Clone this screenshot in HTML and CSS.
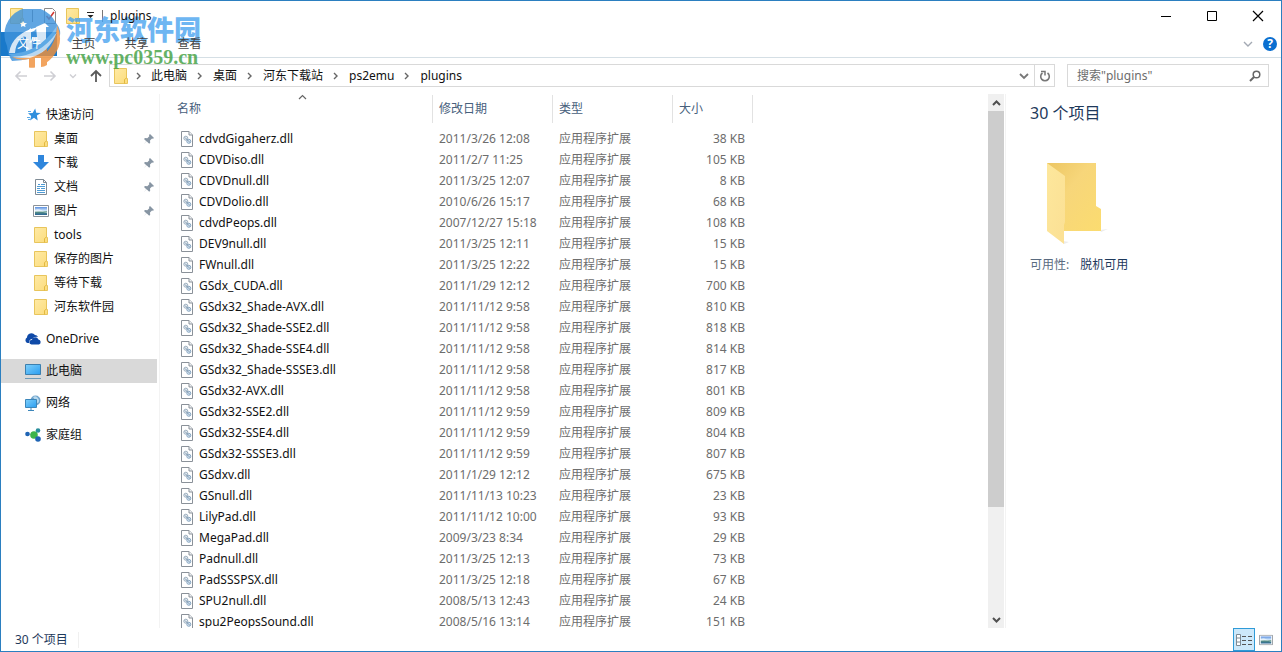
FILE: index.html
```
<!DOCTYPE html>
<html lang="zh-CN">
<head>
<meta charset="utf-8">
<title>plugins</title>
<link rel="stylesheet" href="styles.css">
</head>
<body>
<svg class="defs" aria-hidden="true">
  <defs>
    <linearGradient id="g-folder" x1="0" y1="0" x2="1" y2="1"><stop offset="0" stop-color="#ffeaa5"/><stop offset="1" stop-color="#fbdc7c"/></linearGradient>
    <linearGradient id="g-screen" x1="0" y1="0" x2="1" y2="1"><stop offset="0" stop-color="#7fd0fb"/><stop offset="1" stop-color="#2a9df0"/></linearGradient>
    <linearGradient id="g-sky" x1="0" y1="0" x2="0" y2="1"><stop offset="0" stop-color="#5b8fe0"/><stop offset=".45" stop-color="#cfe6fa"/><stop offset=".6" stop-color="#5c9484"/><stop offset="1" stop-color="#2a6496"/></linearGradient>
  </defs>
  <symbol id="i-folder" viewBox="0 0 14 16"><path d="M.5.5h12v10h1v5h-13z" fill="url(#g-folder)" stroke="#e8c55c"/><path d="M10.500 15.500v-4l2-1.500" fill="none" stroke="#e3b93f"/></symbol>
  <symbol id="i-dll" viewBox="0 0 12 16"><path d="M.5.5h7.500l3.500 3.500v11.500h-11z" fill="#fff" stroke="#8a9199"/><path d="M8 .5v3.500h3.500" fill="#eef1f4" stroke="#8a9199"/><circle cx="4.800" cy="7.200" r="2" fill="#e6edf3" stroke="#9dafbf"/><circle cx="7.800" cy="10.300" r="2" fill="#d6e6f4" stroke="#88a6c2"/><path d="M4 6.500l5 5" stroke="#7f98ae"/></symbol>
  <symbol id="i-pin" viewBox="0 0 12 12"><path d="M7 1l4 4-1 .8-1-.2-2 2 .2 2.200-1 1-2.600-2.600L.5 11.500l2.800-3.300L1 6l1-1 2.300.2 2-2L6 2z" fill="#8795a3"/></symbol>
  <symbol id="i-picture" viewBox="0 0 16 12"><path d="M.5.5h15v11H.5z" fill="#fff" stroke="#8b9299"/><path d="M2 2h12v8H2z" fill="url(#g-sky)"/><path d="M2 5q3-2 6 0t6 2v1q-6-2-12-1z" fill="#fff" opacity=".5"/></symbol>
</svg>

<div class="window">
  <header class="titlebar">
    <svg class="folder" viewBox="0 0 14 16"><use href="#i-folder"/></svg>
    <span class="bar"></span>
    <svg class="doc" viewBox="0 0 12 16"><path d="M.5.5h8l3 3v12H.5z" fill="#fff" stroke="#8a8a8a"/><path d="M2.500 8l2.500 3 5-7" fill="none" stroke="#d13a34" stroke-width="1.600"/></svg>
    <svg class="folder" viewBox="0 0 14 16"><use href="#i-folder"/></svg>
    <svg class="qat" viewBox="0 0 9 7"><path d="M1 .5h7" stroke="#222"/><path d="M1.500 3h6L4.500 6z" fill="#222"/></svg>
    <span class="bar"></span>
    <h1 class="title">plugins</h1>
    <button class="winbtn" aria-label="最小化"><svg viewBox="0 0 12 12"><path d="M1 6.500h10" stroke="#000"/></svg></button>
    <button class="winbtn" aria-label="最大化"><svg viewBox="0 0 12 12"><path d="M1.500 1.500h9v9h-9z" fill="none" stroke="#000"/></svg></button>
    <button class="winbtn" aria-label="关闭"><svg viewBox="0 0 12 12"><path d="M1 1l10 10M11 1L1 11" stroke="#000" stroke-width="1.200"/></svg></button>
  </header>

  <nav class="ribbon">
    <button class="tab file"><span class="tab-label">文件</span></button>
    <button class="tab"><span class="tab-label">主页</span></button>
    <button class="tab"><span class="tab-label">共享</span></button>
    <button class="tab"><span class="tab-label">查看</span></button>
    <button class="expand" aria-label="展开功能区"><svg viewBox="0 0 10 8"><path d="M1 2l4 4 4-4" fill="none" stroke="#a3a9b3" stroke-width="1.400"/></svg></button>
    <button class="help" aria-label="帮助">?</button>
  </nav>

  <div class="navbar">
    <button class="nav" aria-label="后退"><svg viewBox="0 0 14 12"><path d="M13 6H2M6.500 1.500L2 6l4.500 4.500" fill="none" stroke="#cfcfd4" stroke-width="1.600"/></svg></button>
    <button class="nav" aria-label="前进"><svg viewBox="0 0 14 12"><path d="M1 6h11M7.500 1.500L12 6l-4.500 4.500" fill="none" stroke="#cfcfd4" stroke-width="1.600"/></svg></button>
    <button class="nav recent" aria-label="最近位置"><svg viewBox="0 0 14 12"><path d="M4 4.500l3 3 3-3" fill="none" stroke="#cfcfd4" stroke-width="1.400"/></svg></button>
    <button class="nav up" aria-label="上移"><svg viewBox="0 0 14 14"><path d="M7 13V2M2 7l5-5 5 5" fill="none" stroke="#5a5a5a" stroke-width="1.800"/></svg></button>
    <div class="address">
      <svg class="folder" viewBox="0 0 14 16"><use href="#i-folder"/></svg>
      <svg class="sep" viewBox="0 0 6 8"><path d="M1 1l3 3-3 3" fill="none" stroke="#666" stroke-width="1.400"/></svg>
      <a class="crumb" href="#">此电脑</a>
      <svg class="sep" viewBox="0 0 6 8"><path d="M1 1l3 3-3 3" fill="none" stroke="#666" stroke-width="1.400"/></svg>
      <a class="crumb" href="#">桌面</a>
      <svg class="sep" viewBox="0 0 6 8"><path d="M1 1l3 3-3 3" fill="none" stroke="#666" stroke-width="1.400"/></svg>
      <a class="crumb" href="#">河东下载站</a>
      <svg class="sep" viewBox="0 0 6 8"><path d="M1 1l3 3-3 3" fill="none" stroke="#666" stroke-width="1.400"/></svg>
      <a class="crumb" href="#">ps2emu</a>
      <svg class="sep" viewBox="0 0 6 8"><path d="M1 1l3 3-3 3" fill="none" stroke="#666" stroke-width="1.400"/></svg>
      <a class="crumb" href="#">plugins</a>
      <button class="history" aria-label="历史记录"><svg viewBox="0 0 10 8"><path d="M1 2l4 4 4-4" fill="none" stroke="#777" stroke-width="1.800"/></svg></button>
      <button class="refresh" aria-label="刷新"><svg viewBox="0 0 12 12"><path d="M8.500 3A4.300 4.300 0 1 1 3.500 3" fill="none" stroke="#777" stroke-width="1.600"/><path d="M2 1.500h4v4" fill="none" stroke="#777" stroke-width="1.500"/></svg></button>
    </div>
    <label class="search">
      <input type="search" placeholder='搜索"plugins"' aria-label="搜索">
      <svg viewBox="0 0 12 12"><circle cx="7.500" cy="4.500" r="3.300" fill="none" stroke="#666" stroke-width="1.500"/><path d="M5 7L1 11" stroke="#666" stroke-width="2"/></svg>
    </label>
  </div>

  <main class="body">
    <aside class="tree">
      <a class="root" href="#"><svg class="ic" viewBox="0 0 16 16"><path d="M10.200 1.500l1 4.300 4.600.2-3.900 2.500.8 5-3.700-2.700L5 13.500l1.200-4.600L3 6.200l4.600-.3z" fill="#2f8fdd"/><path d="M3 4.500h3M2 10.500h3M3 12.500h2" stroke="#5aaae8"/></svg>快速访问</a>
      <a class="item" href="#"><svg class="ic" viewBox="0 0 14 16"><use href="#i-folder"/></svg>桌面<svg class="pin"><use href="#i-pin"/></svg></a>
      <a class="item" href="#"><svg class="ic" viewBox="0 0 16 16"><path d="M5 0h6v7h5l-8 8-8-8h5z" fill="#2f86dc"/></svg>下载<svg class="pin"><use href="#i-pin"/></svg></a>
      <a class="item" href="#"><svg class="ic" viewBox="0 0 16 16"><path d="M2.500.5h8l3 3v12h-11z" fill="#fff" stroke="#7f8b95"/><path d="M10.500.5v3h3" fill="none" stroke="#7f8b95"/><path d="M5 5.500h2M8 5.500h4M4 7.500h8M4 9.500h3M8 9.500h4M4 11.500h8M4 13.500h8" stroke="#4f9bd4"/></svg>文档<svg class="pin"><use href="#i-pin"/></svg></a>
      <a class="item" href="#"><svg class="ic" viewBox="0 0 16 12"><use href="#i-picture"/></svg>图片<svg class="pin"><use href="#i-pin"/></svg></a>
      <a class="item" href="#"><svg class="ic" viewBox="0 0 14 16"><use href="#i-folder"/></svg>tools</a>
      <a class="item" href="#"><svg class="ic" viewBox="0 0 14 16"><use href="#i-folder"/></svg>保存的图片</a>
      <a class="item" href="#"><svg class="ic" viewBox="0 0 14 16"><use href="#i-folder"/></svg>等待下载</a>
      <a class="item" href="#"><svg class="ic" viewBox="0 0 14 16"><use href="#i-folder"/></svg>河东软件园</a>
      <a class="root spaced" href="#"><svg class="ic" viewBox="0 0 16 16"><path d="M2.500 12A3 3 0 0 1 2 6.500 4.500 4.500 0 0 1 10 4q2 0 3 2-4-1-5.500 2Q4 8 4 12z" fill="#0f4aa8"/><path d="M6.500 13.500a2.300 2.300 0 0 1 .3-4.600 3.500 3.500 0 0 1 6.600-.4 2.600 2.600 0 0 1 .6 5z" fill="#0f4aa8"/></svg>OneDrive</a>
      <a class="root spaced selected" href="#"><svg class="ic" viewBox="0 0 16 16"><path d="M.5 1.500h15v10H.5z" fill="url(#g-screen)" stroke="#3c7fae"/><path d="M0 15.500h16" stroke="#6d9ab8"/></svg>此电脑</a>
      <a class="root spaced" href="#"><svg class="ic" viewBox="0 0 16 16"><circle cx="10.500" cy="5.500" r="5" fill="#6fa3cb"/><path d="M8 2q3-2 5 1t0 5q-3 0-3-3z" fill="#b8d9ee"/><path d="M.5 4.500h11v8H.5z" fill="url(#g-screen)" stroke="#3c86ba"/><path d="M3 15.500h6M6 13v2" stroke="#3c86ba"/></svg>网络</a>
      <a class="root spaced" href="#"><svg class="ic" viewBox="0 0 16 16"><path d="M3 7l6 1 4-4M9 8l4 4" stroke="#8fc4de" fill="none"/><circle cx="9" cy="8" r="3.800" fill="#3eb44a"/><circle cx="2.500" cy="7" r="2.300" fill="#1f64b4"/><circle cx="13" cy="3.500" r="2.300" fill="#2a8f9c"/><circle cx="13" cy="12" r="2.800" fill="#1f64b4"/></svg>家庭组</a>
    </aside>

    <section class="files">
      <svg class="sort" viewBox="0 0 9 6"><path d="M1 5l3.500-3.500L8 5" fill="none" stroke="#666" stroke-width="1.200"/></svg>
      <table>
        <thead><tr><th class="c-name">名称</th><th class="c-date">修改日期</th><th class="c-type">类型</th><th class="c-size">大小</th></tr></thead>
        <tbody>
          <tr><td><svg><use href="#i-dll"/></svg>cdvdGigaherz.dll</td><td>2011/3/26 12:08</td><td>应用程序扩展</td><td>38 KB</td></tr>
          <tr><td><svg><use href="#i-dll"/></svg>CDVDiso.dll</td><td>2011/2/7 11:25</td><td>应用程序扩展</td><td>105 KB</td></tr>
          <tr><td><svg><use href="#i-dll"/></svg>CDVDnull.dll</td><td>2011/3/25 12:07</td><td>应用程序扩展</td><td>8 KB</td></tr>
          <tr><td><svg><use href="#i-dll"/></svg>CDVDolio.dll</td><td>2010/6/26 15:17</td><td>应用程序扩展</td><td>68 KB</td></tr>
          <tr><td><svg><use href="#i-dll"/></svg>cdvdPeops.dll</td><td>2007/12/27 15:18</td><td>应用程序扩展</td><td>108 KB</td></tr>
          <tr><td><svg><use href="#i-dll"/></svg>DEV9null.dll</td><td>2011/3/25 12:11</td><td>应用程序扩展</td><td>15 KB</td></tr>
          <tr><td><svg><use href="#i-dll"/></svg>FWnull.dll</td><td>2011/3/25 12:22</td><td>应用程序扩展</td><td>15 KB</td></tr>
          <tr><td><svg><use href="#i-dll"/></svg>GSdx_CUDA.dll</td><td>2011/1/29 12:12</td><td>应用程序扩展</td><td>700 KB</td></tr>
          <tr><td><svg><use href="#i-dll"/></svg>GSdx32_Shade-AVX.dll</td><td>2011/11/12 9:58</td><td>应用程序扩展</td><td>810 KB</td></tr>
          <tr><td><svg><use href="#i-dll"/></svg>GSdx32_Shade-SSE2.dll</td><td>2011/11/12 9:58</td><td>应用程序扩展</td><td>818 KB</td></tr>
          <tr><td><svg><use href="#i-dll"/></svg>GSdx32_Shade-SSE4.dll</td><td>2011/11/12 9:58</td><td>应用程序扩展</td><td>814 KB</td></tr>
          <tr><td><svg><use href="#i-dll"/></svg>GSdx32_Shade-SSSE3.dll</td><td>2011/11/12 9:58</td><td>应用程序扩展</td><td>817 KB</td></tr>
          <tr><td><svg><use href="#i-dll"/></svg>GSdx32-AVX.dll</td><td>2011/11/12 9:58</td><td>应用程序扩展</td><td>801 KB</td></tr>
          <tr><td><svg><use href="#i-dll"/></svg>GSdx32-SSE2.dll</td><td>2011/11/12 9:59</td><td>应用程序扩展</td><td>809 KB</td></tr>
          <tr><td><svg><use href="#i-dll"/></svg>GSdx32-SSE4.dll</td><td>2011/11/12 9:59</td><td>应用程序扩展</td><td>804 KB</td></tr>
          <tr><td><svg><use href="#i-dll"/></svg>GSdx32-SSSE3.dll</td><td>2011/11/12 9:59</td><td>应用程序扩展</td><td>807 KB</td></tr>
          <tr><td><svg><use href="#i-dll"/></svg>GSdxv.dll</td><td>2011/1/29 12:12</td><td>应用程序扩展</td><td>675 KB</td></tr>
          <tr><td><svg><use href="#i-dll"/></svg>GSnull.dll</td><td>2011/11/13 10:23</td><td>应用程序扩展</td><td>23 KB</td></tr>
          <tr><td><svg><use href="#i-dll"/></svg>LilyPad.dll</td><td>2011/11/12 10:00</td><td>应用程序扩展</td><td>93 KB</td></tr>
          <tr><td><svg><use href="#i-dll"/></svg>MegaPad.dll</td><td>2009/3/23 8:34</td><td>应用程序扩展</td><td>29 KB</td></tr>
          <tr><td><svg><use href="#i-dll"/></svg>Padnull.dll</td><td>2011/3/25 12:13</td><td>应用程序扩展</td><td>73 KB</td></tr>
          <tr><td><svg><use href="#i-dll"/></svg>PadSSSPSX.dll</td><td>2011/3/25 12:18</td><td>应用程序扩展</td><td>67 KB</td></tr>
          <tr><td><svg><use href="#i-dll"/></svg>SPU2null.dll</td><td>2008/5/13 12:43</td><td>应用程序扩展</td><td>24 KB</td></tr>
          <tr><td><svg><use href="#i-dll"/></svg>spu2PeopsSound.dll</td><td>2008/5/16 13:14</td><td>应用程序扩展</td><td>151 KB</td></tr>
        </tbody>
      </table>
    </section>

    <div class="scrollbar">
      <button class="arrow" aria-label="向上滚动"><svg viewBox="0 0 9 8"><path d="M1 6l3.500-3.500L8 6" fill="none" stroke="#505050" stroke-width="2"/></svg></button>
      <div class="thumb"></div>
      <div class="track"></div>
      <button class="arrow" aria-label="向下滚动"><svg viewBox="0 0 9 8"><path d="M1 2l3.500 3.500L8 2" fill="none" stroke="#505050" stroke-width="2"/></svg></button>
    </div>

    <aside class="details">
      <h2>30 个项目</h2>
      <svg class="bigfolder" viewBox="0 0 62 84">
        <defs>
          <linearGradient id="g-back" x1="0" y1="0" x2="1" y2="1"><stop offset="0" stop-color="#ecc663"/><stop offset=".4" stop-color="#f7d67a"/><stop offset="1" stop-color="#fbdc70"/></linearGradient>
          <linearGradient id="g-front" x1="0" y1="0" x2="1" y2="1"><stop offset="0" stop-color="#fde79c"/><stop offset="1" stop-color="#fbe094"/></linearGradient>
        </defs>
        <path d="M17 79l6 1-5 2zM54 68l8-1-7 3z" fill="#ececec"/>
        <path d="M1 1h49v43l5 3v22H1z" fill="url(#g-back)"/>
        <path d="M1 1l18 13v46l-1 3v19L1 69z" fill="url(#g-front)"/>
      </svg>
      <dl><dt>可用性:</dt><dd>脱机可用</dd></dl>
    </aside>
  </main>

  <footer class="status">
    <span class="count">30 个项目</span>
    <button class="view active" aria-label="详细信息"><svg viewBox="0 0 16 14"><path d="M.5 1.500h4v11h-4zM.5 5h4M.5 9h4" fill="#fff" stroke="#7d8a94"/><path d="M6 3.500h4M12 3.500h4M6 7.500h4M12 7.500h4M6 11.500h4M12 11.500h4" stroke="#555"/></svg></button>
    <button class="view" aria-label="大缩略图"><svg viewBox="0 0 16 12"><use href="#i-picture"/></svg></button>
  </footer>

  <div class="watermark">
    <svg viewBox="0 0 60 60">
      <path d="M3 37A27 27 0 0 1 52 14Q57 20 56 26 46 50 8 52 4 46 3 37z" fill="#3f93dc"/>
      <path d="M53 16Q60 32 51 45 46 52 40 55V45Q52 36 53 16z" fill="#f0913c"/>
      <path d="M8 48Q30 50 43 39V56Q40 58 37 58V49H31V58.500Q28 59 25 58.500V50Q15 52 8 48z" fill="#f0913c"/>
      <path d="M5 44Q8 24 34 18L30 22Q12 28 11 44z" fill="#fff"/>
      <path d="M18 27l9-8v23h-5V28zM32 18l9-4 4 4h-3v22q-4 4-9 5V32h-5v-4h5z" fill="#fff"/>
      <path d="M4 45Q34 45 53 17 50 40 29 47 15 52 4 45z" fill="#6db4ec"/>
      <path d="M9 48Q36 47 53 23 46 43 26 49z" fill="#fff" opacity=".75"/>
      <path d="M19 12l1.500 2 2.500.3-2 1.500.5 2.200-2.500-1-2 1 .3-2.500-1.300-1.500 2.200-.3z" fill="#fff"/>
    </svg>
    <div class="wm-text"><strong>河东软件园</strong><em>www.pc0359.cn</em></div>
  </div>
</div>
</body>
</html>
```

FILE: styles.css
```
* { box-sizing: border-box; }
body { margin: 0; font: 12px/16px "Noto Sans", "Noto Sans CJK SC", sans-serif; color: #111; background: #fff; }
button { border: 0; padding: 0; background: none; font: inherit; color: inherit; }
a { color: inherit; text-decoration: none; }
svg { display: block; flex: none; }
.defs { position: absolute; width: 0; height: 0; }

.window { position: relative; display: flex; flex-direction: column; height: 100vh; border: 1px solid #2b7fc0; background: #fff; overflow: hidden; }

.titlebar { display: flex; align-items: center; height: 29px; padding-left: 9px; flex: none; }
.folder { width: 14px; height: 16px; }
.doc { width: 12px; height: 16px; margin-right: 10px; }
.bar { width: 1px; height: 12px; margin: 0 11px 0 8px; background: #777; }
.qat { width: 9px; height: 7px; margin-left: 6px; }
.qat + .bar { margin: 0 7px; }
.title { flex: 1; margin: 0; font-size: 12px; font-weight: 400; }
.winbtn { display: flex; justify-content: center; align-items: center; width: 46px; height: 29px; }
.winbtn svg { width: 12px; height: 12px; }

.ribbon { display: flex; align-items: center; height: 28px; flex: none; border-bottom: 1px solid #d5dfe5; }
.tab { width: 53px; height: 24px; color: #444; }
.tab.file { width: 56px; background: #1979ca; color: #fff; }
.title, .tab-label { position: relative; z-index: 1; }
.expand { margin-left: auto; }
.expand svg { width: 10px; height: 8px; }
.help { width: 14px; height: 14px; margin: 0 4px 0 10px; border-radius: 50%; background: #0b6fd0; color: #fff; font-weight: 700; line-height: 14px; }

.navbar { display: flex; align-items: center; height: 35px; padding: 0 12px 0 13px; flex: none; }
.nav svg { width: 14px; height: 12px; }
.nav { width: 14px; margin-right: 15px; }
.nav.recent { margin-right: 9px; margin-left: -6px; }
.nav.up { margin-right: 6px; }
.nav.up svg { height: 14px; }
.address { display: flex; align-items: center; flex: 1; height: 23px; padding-left: 4px; border: 1px solid #d9d9d9; color: #111; }
.sep { width: 6px; height: 8px; margin: 0 10px; }
.folder + .sep { margin: 0 9px 0 8px; }
.history { margin-left: auto; width: 20px; }
.history svg { width: 10px; height: 8px; margin: auto; }
.refresh { width: 20px; height: 21px; border-left: 1px solid #d9d9d9; }
.refresh svg { width: 12px; height: 12px; margin: auto; }
.search { display: flex; align-items: center; width: 202px; height: 23px; margin-left: 12px; padding: 0 7px 0 9px; border: 1px solid #d9d9d9; }
.search input { flex: 1; min-width: 0; border: 0; padding: 0; outline: 0; font: inherit; background: none; }
.search input::placeholder { color: #6d6d6d; opacity: 1; }
.search svg { width: 12px; height: 12px; }

.body { display: flex; flex: 1; min-height: 0; padding-top: 1px; }
.tree { width: 159px; flex: none; padding-top: 9px; border-right: 1px solid #f3f3f3; overflow: hidden; }
.tree a { display: flex; align-items: center; height: 24px; width: 156px; }
.tree .ic { width: 16px; height: 16px; margin-right: 5px; }
.root { padding-left: 24px; }
.item { padding-left: 32px; }
.spaced { margin-top: 8px; }
.selected { background: #d9d9d9; }
.pin { width: 12px; height: 12px; margin: 0 2px 0 auto; }

.files { position: relative; flex: 1; min-width: 0; overflow: hidden; padding: 1px 0 0 11px; }
.sort { position: absolute; left: 138px; top: 0; width: 9px; height: 6px; }
table { width: 582px; border-collapse: separate; border-spacing: 0; table-layout: fixed; }
th { height: 28px; padding: 0 6px; border-right: 1px solid #e2e2e2; text-align: left; font-weight: 400; color: #47607c; }
tbody::before { content: ""; display: block; height: 5px; }
.c-name { width: 262px; }
.c-date, .c-type { width: 120px; }
.c-size { width: 80px; }
td { height: 21px; padding: 0 6px; color: #6d6d6d; white-space: nowrap; }
td:first-child { display: flex; align-items: center; padding-left: 10px; color: #111; }
td:first-child svg { width: 12px; height: 16px; margin-right: 6px; }
td:last-child { text-align: right; padding-right: 8px; }

.scrollbar { display: flex; flex-direction: column; width: 16px; flex: none; background: #f0f0f0; }
.arrow { display: flex; justify-content: center; align-items: center; height: 17px; }
.arrow svg { width: 9px; height: 8px; }
.thumb { flex: 395; background: #cdcdcd; }
.track { flex: 104; }

.details { width: 276px; flex: none; margin-left: 1px; padding: 9px 24px; border-left: 1px solid #f3f3f3; color: #1e395b; }
.details h2 { margin: 0; font-size: 16px; line-height: 20px; font-weight: 400; }
.bigfolder { width: 62px; height: 84px; margin: 39px 0 0 16px; }
dl { display: flex; gap: 11px; margin: 11px 0 0; }
dt { color: #5a6b80; }
dd { margin: 0; }

.status { display: flex; align-items: center; height: 23px; flex: none; padding: 0 4px 0 14px; color: #1e395b; }
.count { padding-right: 10px; margin-right: auto; border-right: 1px solid #f0f0f0; }
.view { display: flex; justify-content: center; align-items: center; width: 22px; height: 23px; }
.view svg { width: 14px; height: 12px; }
.view.active { border: 1px solid #2f9bd8; background: #cce8fa; }
.view.active svg { width: 16px; height: 14px; }

.watermark { position: absolute; left: 3px; top: 8px; display: flex; gap: 2px; pointer-events: none; }
.watermark svg { width: 60px; height: 60px; opacity: .82; }
.wm-text { display: flex; flex-direction: column; padding-top: 6px; opacity: .8; }
.wm-text strong { font: 900 27px/28px "Noto Sans CJK SC", sans-serif; color: #4aa4f0; }
.wm-text em { font: 700 20px/28px "Liberation Serif", serif; color: #3fa040; }
```
